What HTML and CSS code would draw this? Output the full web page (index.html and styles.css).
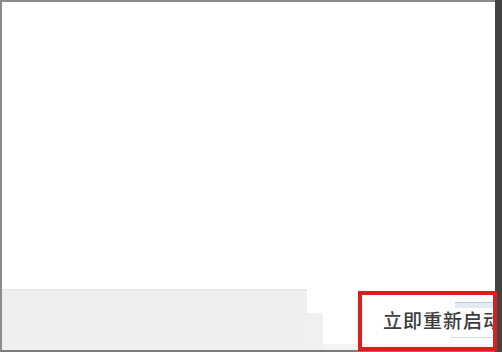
FILE: index.html
```html
<!DOCTYPE html>
<html>
<head>
	<meta charset="utf-8">
	<meta name="viewport" content="width=device-width, initial-scale=1">
	<title>重新启动</title>
	<link rel="stylesheet" href="styles.css">
</head>
<body>
   <div class="screen">
      <div class="window">
         <div class="content"></div>
         <div class="footer">
            <div class="footer-bar"></div>
            <div class="footer-step"></div>
            <div class="footer-action">
               <div class="restart-btn">立即重新启动</div>
            </div>
         </div>
      </div>
      <div class="scrollbar"></div>
      <div class="highlight"></div>
   </div>
</body>
</html>
```

FILE: styles.css
```css
 body{
    margin: 0;
    padding: 0;
    background-color: #fff;
    font-family: "Noto Sans CJK SC", "Noto Sans", sans-serif;
 }

 .screen{
   position: relative;
   width: 502px;
   height: 352px;
   display: flex;
   overflow: hidden;
 }

 .window{
   flex: 1;
   min-width: 0;
   overflow: hidden;
   display: flex;
   flex-direction: column;
   border-top: 2px solid #8c8c8c;
   border-left: 2px solid #8c8c8c;
   border-bottom: 2px solid #7a7a7a;
 }

 .content{
   flex: 1;
   background-color: #fff;
 }

 .footer{
   height: 61px;
   display: flex;
 }

 .footer-bar{
   width: 305px;
   flex: none;
   background-color: #efefef;
   border-top: 1px solid #e3e3e3;
 }

 .footer-step{
   width: 16px;
   flex: none;
   margin-top: 24px;
   background-color: #f0f0f0;
 }

 .footer-action{
   flex: 1;
   min-width: 0;
   display: flex;
   align-items: center;
   overflow: hidden;
   background: linear-gradient(to bottom, #fff 55px, #f4f4f4 55px);
 }

 .restart-btn{
   flex: none;
   margin-left: 58px;
   padding: 8px 0 8px 2px;
   font-size: 19px;
   letter-spacing: 1px;
   font-weight: 500;
   line-height: 20px;
   color: #3c3c3c;
   white-space: nowrap;
   background-image:
     linear-gradient(#b9cce0, #b9cce0),
     linear-gradient(#e3ecf5, #e3ecf5),
     linear-gradient(#c9d8e8, #c9d8e8);
   background-repeat: no-repeat;
   background-size: 40px 1px, 40px 5px, 42px 2px;
   background-position: 74px 0, 74px 1px, 70px 35px;
 }

 .scrollbar{
   width: 7px;
   flex: none;
   background-color: #434343;
 }

 .highlight{
   position: absolute;
   left: 358px;
   top: 291px;
   width: 131px;
   height: 52px;
   border: 4px solid #d81f1c;
 }
```
